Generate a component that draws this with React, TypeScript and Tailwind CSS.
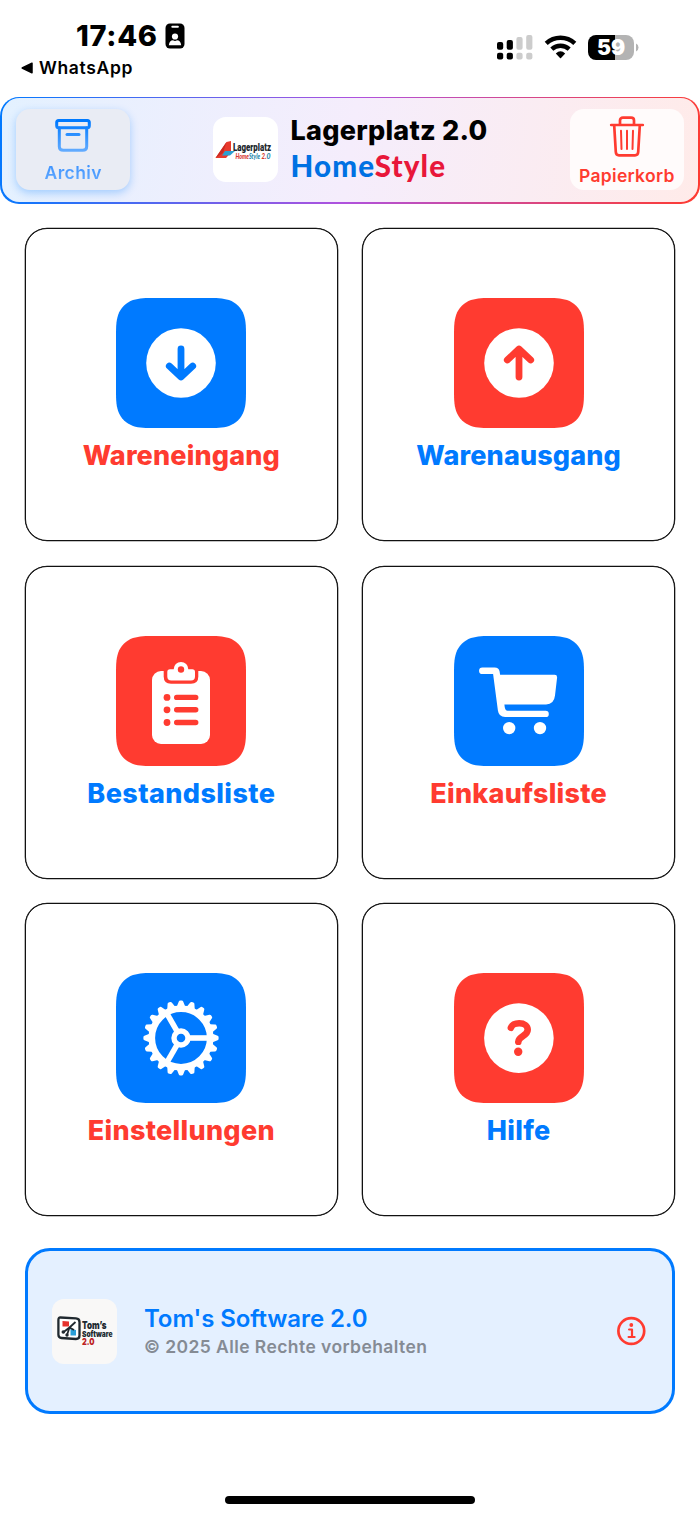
import React from "react";

const BLUE = "#007aff";
const RED = "#ff3b30";

// 130px tile with continuous corners
const TILE_SHAPE =
  "M40 0H90C100.600 0 106.500 0 113 2.100C120 4.600 125.400 10 127.900 17C130 23.500 130 29.400 130 40V90C130 100.600 130 106.500 127.900 113C125.400 120 120 125.400 113 127.900C106.500 130 100.600 130 90 130H40C29.400 130 23.500 130 17 127.900C10 125.400 4.600 120 2.100 113C0 106.500 0 100.600 0 90V40C0 29.400 0 23.500 2.100 17C4.600 10 10 4.600 17 2.100C23.500 0 29.400 0 40 0Z";

interface GlyphProps {
  tint: string;
}

const ArrowDownGlyph: React.FC<GlyphProps> = ({ tint }) => (
  <>
    <circle cx="65" cy="65" r="34.800" fill="#fff" />
    <path
      d="M65 51V78.500M53.300 68L65 79L76.700 68"
      fill="none"
      stroke={tint}
      strokeWidth="6.800"
      strokeLinecap="round"
      strokeLinejoin="round"
    />
  </>
);

const ArrowUpGlyph: React.FC<GlyphProps> = ({ tint }) => (
  <>
    <circle cx="65" cy="65" r="34.800" fill="#fff" />
    <path
      d="M65 79V51.500M53.300 62L65 51L76.700 62"
      fill="none"
      stroke={tint}
      strokeWidth="6.800"
      strokeLinecap="round"
      strokeLinejoin="round"
    />
  </>
);

const ClipboardGlyph: React.FC<GlyphProps> = ({ tint }) => (
  <>
    <rect x="36" y="35" width="58" height="73" rx="9" fill="#fff" />
    <path d="M47.700 34V40.500Q47.700 47.800 55 47.800H75Q82.300 47.800 82.300 40.500V34Z" fill={tint} />
    <path
      d="M54 33.200H57.700A7.300 7.300 0 0 1 72.300 33.200H76.300Q79 33.200 79 36V40.500Q79 44.500 75 44.500H55.300Q51.300 44.500 51.300 40.500V36Q51.300 33.200 54 33.200Z"
      fill="#fff"
    />
    <circle cx="65" cy="33.500" r="3.200" fill={tint} />
    {[61.4, 73.8, 86.5].map((y) => (
      <g key={y} fill={tint}>
        <circle cx="51" cy={y} r="3.400" />
        <rect x="58" y={y - 2.7} width="24.400" height="5.400" rx="2.700" />
      </g>
    ))}
  </>
);

const CartGlyph: React.FC<GlyphProps> = () => (
  <g fill="#fff" transform="translate(-.400 -.400)">
    <path d="M28.800 31.800H41Q45.300 31.800 46 36L46.500 39.200H101Q103.700 39.200 103.500 42L101.400 60Q100.500 68.800 92.500 68.800H50.800L51.100 71.500Q51.600 75.100 54 75.100H92A3.200 3.200 0 0 1 92 81.500H51.500Q45.200 81.500 44.300 75L39.500 38.500H28.800A3.350 3.350 0 0 1 28.800 31.800Z" />
    <circle cx="55.600" cy="92.500" r="6.200" />
    <circle cx="86.400" cy="92.500" r="6.200" />
  </g>
);

const GearGlyph: React.FC<GlyphProps> = () => (
  <g transform="translate(65 65)" stroke="#fff" fill="none">
    <circle r="29.200" strokeWidth="6.600" />
    <circle r="7" strokeWidth="5.400" />
    {[0, 120, 240].map((a) => (
      <path key={a} d="M8 0H29" strokeWidth="5.600" transform={`rotate(${a})`} />
    ))}
    {Array.from({ length: 20 }, (_, i) => (
      <path
        key={i}
        d="M31 -2.700L36 -.700V.700L31 2.700Z"
        fill="#fff"
        strokeWidth="3.200"
        strokeLinejoin="round"
        transform={`rotate(${i * 18})`}
      />
    ))}
  </g>
);

const HelpGlyph: React.FC<GlyphProps> = ({ tint }) => (
  <g transform="translate(-.300 .300)">
    <circle cx="65.200" cy="64.800" r="34.800" fill="#fff" />
    <path
      d="M57.200 54.500C58.500 51.300 61.500 50 65.500 50C70.500 50 74 52.500 74 56.500C74 63 64.800 62.500 64.600 68.500"
      fill="none"
      stroke={tint}
      strokeWidth="6.600"
      strokeLinecap="round"
      strokeLinejoin="round"
    />
    <circle cx="64.500" cy="78.500" r="4.200" fill={tint} />
  </g>
);

interface MenuItem {
  label: string;
  tint: string;
  labelClass: string;
  Glyph: React.FC<GlyphProps>;
}

const MENU: MenuItem[] = [
  { label: "Wareneingang", tint: BLUE, labelClass: "text-[#ff3b30] tracking-[0.150px]", Glyph: ArrowDownGlyph },
  { label: "Warenausgang", tint: RED, labelClass: "text-[#007aff] tracking-[0.150px]", Glyph: ArrowUpGlyph },
  { label: "Bestandsliste", tint: RED, labelClass: "text-[#007aff] tracking-[0.400px]", Glyph: ClipboardGlyph },
  { label: "Einkaufsliste", tint: BLUE, labelClass: "text-[#ff3b30] tracking-[0.250px]", Glyph: CartGlyph },
  { label: "Einstellungen", tint: BLUE, labelClass: "text-[#ff3b30] tracking-[0.300px]", Glyph: GearGlyph },
  { label: "Hilfe", tint: RED, labelClass: "text-[#007aff] tracking-[0.300px]", Glyph: HelpGlyph },
];

const MenuCard: React.FC<{ item: MenuItem }> = ({ item }) => {
  const { Glyph } = item;
  return (
    <button className="flex h-[313px] flex-col items-center rounded-[22px] border border-[#111] bg-white pt-[69px] shadow-[0_0_0_0.300px_#111]">
      <svg width="130" height="130" viewBox="0 0 130 130">
        <path d={TILE_SHAPE} fill={item.tint} />
        <Glyph tint={item.tint} />
      </svg>
      <span className={`mt-[12px] text-[27px] leading-8 font-extrabold whitespace-nowrap ${item.labelClass}`}>
        {item.label}
      </span>
    </button>
  );
};

const StatusBar: React.FC = () => (
  <div className="flex h-[96.500px] items-start justify-between">
    <div className="pl-[21px] pt-[19px]">
      <div className="flex items-center pl-[55px]">
        <span className="w-[89px] pt-px text-[29px] leading-8 font-extrabold tracking-[0.700px] whitespace-nowrap">17:46</span>
        <svg width="20" height="26" viewBox="0 0 20 26">
          <rect x=".500" y=".500" width="19" height="25" rx="4.500" />
          <rect x="6.300" y="2.800" width="7.600" height="2" rx="1" fill="#fff" />
          <circle cx="10" cy="13.500" r="3.100" fill="#fff" />
          <path d="M3.800 22.300Q4.500 17.300 8 17.300Q10 18.600 12 17.300Q15.500 17.300 16.200 22.300Z" fill="#fff" />
        </svg>
      </div>
      <div className="mt-[4px] flex items-center">
        <svg width="13" height="12" viewBox="0 0 13 12">
          <path d="M1.200 6L11 1.200V10.800Z" stroke="#000" strokeWidth="1.500" strokeLinejoin="round" />
        </svg>
        <span className="ml-[5px] text-[17.500px] leading-6 font-semibold tracking-[0.650px]">WhatsApp</span>
      </div>
    </div>
    <div className="flex items-center pt-[34px] pr-[61px]">
      <svg width="36" height="26" viewBox="0 0 36 26">
        <rect x="0" y="8" width="6.200" height="7.700" rx="2" />
        <rect x="9.700" y="6" width="6.200" height="9.700" rx="2" />
        <rect x="19.400" y="3" width="6.200" height="12.700" rx="2" fill="#ccc" />
        <rect x="29.200" y="1" width="6.200" height="14.700" rx="2" fill="#ccc" />
        <rect x="0" y="18.700" width="6.200" height="6.800" rx="2" />
        <rect x="9.700" y="18.700" width="6.200" height="6.800" rx="2" />
        <rect x="19.400" y="18.700" width="6.200" height="6.800" rx="2" fill="#ccc" />
        <rect x="29.200" y="18.700" width="6.200" height="6.800" rx="2" fill="#ccc" />
      </svg>
      <svg className="ml-[11px]" width="33" height="26" viewBox="0 0 33 26">
        <path d="M2.200 9.300A21.300 21.300 0 0 1 30.800 9.300" fill="none" stroke="#000" strokeWidth="4.500" />
        <path d="M7.800 15.200A12.900 12.900 0 0 1 25.200 15.200" fill="none" stroke="#000" strokeWidth="4.400" />
        <path d="M11.800 19.600Q16.500 14.900 21.200 19.600L17 24Q16.500 24.500 16 24Z" />
      </svg>
      <div className="ml-[11px] flex items-center">
        <div className="flex h-[25px] w-[46px] items-center justify-center rounded-[8px] bg-[linear-gradient(90deg,#000_59%,#b3b3b3_59%)] pt-[2px]">
          <span className="text-[21px] leading-6 font-black text-white">59</span>
        </div>
        <svg className="ml-[2px]" width="3" height="9" viewBox="0 0 3 9">
          <path d="M0 .500Q2.500 1.500 2.500 4.500T0 8.500Z" fill="#b3b3b3" />
        </svg>
      </div>
    </div>
  </div>
);

const LagerplatzLogo: React.FC = () => (
  <svg className="shrink-0 overflow-visible" width="65" height="65" viewBox="0 0 65 65">
    <rect width="65" height="65" rx="13" fill="#fff" />
    <path d="M2.500 41L13.500 25L18 24V35.500L13 41Z" fill="#e9392c" />
    <path d="M13.500 25L10 36L2.500 41Z" fill="#c92a22" />
    <path d="M12 34H22L17 38.500H9Z" fill="#2d9fd0" />
    <text x="20" y="33.500" fontSize="11.500" fontWeight="900" fontFamily="Roboto, sans-serif" fill="#20262b" textLength="38" lengthAdjust="spacingAndGlyphs">
      Lagerplatz
    </text>
    <g fontSize="6.500" fontWeight="900" fontStyle="italic" fontFamily="Lato, sans-serif">
      <text x="22.500" y="41.500" fill="#d93a30" textLength="13.500" lengthAdjust="spacingAndGlyphs">Home</text>
      <text x="36" y="41.500" fill="#2787ab" textLength="11" lengthAdjust="spacingAndGlyphs">Style</text>
      <text x="48.500" y="41.500" fill="#d93a30" textLength="5" lengthAdjust="spacingAndGlyphs">2.</text>
      <text x="53.500" y="41.500" fill="#2787ab" textLength="4" lengthAdjust="spacingAndGlyphs">0</text>
    </g>
  </svg>
);

const TomsLogo: React.FC = () => (
  <svg className="shrink-0 overflow-visible" width="65" height="65" viewBox="0 0 65 65">
    <rect width="65" height="65" rx="12" fill="#f9f8f7" />
    <path d="M8.500 18.500L24 19.300Q27.500 19.500 27.500 23V36.500Q27.500 40 24 40L9.500 39Q6.400 38.800 6.400 35.500V21Q6.400 18.400 8.500 18.500Z" fill="#fff" stroke="#20292f" strokeWidth="2.300" />
    <path d="M10.500 22L17 22.500V27.500H10.500Z" fill="#e5322d" />
    <path d="M18.500 30L24 31V36.500H18.500Z" fill="#2a9fd8" />
    <path d="M23.500 23L17.500 28.500L11 33.500M17.500 28.500L15 36M17.500 28.500L22 31" fill="none" stroke="#20292f" strokeWidth="1.800" />
    <circle cx="11.300" cy="33" r="1.800" fill="#20292f" />
    <circle cx="15" cy="36" r="1.700" fill="#20292f" />
    <g fontFamily="Inter, sans-serif" fontWeight="900" fontSize="10.500" fill="#20292f">
      <text x="30" y="29.500" textLength="24.500" lengthAdjust="spacingAndGlyphs">Tom’s</text>
      <text x="30" y="37.500" fontSize="8" textLength="30.500" lengthAdjust="spacingAndGlyphs">Software</text>
      <text x="30" y="46" fontSize="9.500" fill="#bd1f24" textLength="12.500" lengthAdjust="spacingAndGlyphs">2.0</text>
    </g>
  </svg>
);

const Header: React.FC = () => (
  <header className="h-[107px] rounded-[19px] bg-[linear-gradient(98.700deg,#007aff,#af52de_50%,#ff3b30)] p-[1.700px]">
    <div className="flex h-full items-start justify-between rounded-[17.500px] bg-[linear-gradient(98.700deg,#e3f1ff,#f5edfc_50%,#ffebe9)] px-[14.500px] pt-[10.500px]">
      <button className="flex h-[81px] w-[114px] flex-col items-center rounded-[14px] bg-[#e9ecf4] pt-[9px] shadow-[0_3px_8px_rgba(0,122,255,0.3)]">
        <svg width="36" height="34" viewBox="0 0 36 34">
          <defs>
            <linearGradient id="archive-fade" gradientUnits="userSpaceOnUse" x1="0" y1="4" x2="0" y2="34">
              <stop stopColor="#007aff" />
              <stop offset="1" stopColor="#66adff" />
            </linearGradient>
          </defs>
          <g fill="none" stroke="url(#archive-fade)" strokeWidth="3" strokeLinejoin="round" strokeLinecap="round">
            <rect x="1.700" y="2.400" width="32.600" height="7.400" rx="2" />
            <path d="M4.300 10V28.500Q4.300 32.300 8.300 32.300H27.700Q31.700 32.300 31.700 28.500V10" />
            <path d="M12 16.500H24" />
          </g>
        </svg>
        <span className="mt-[9px] bg-linear-to-b from-[#368fff] to-[#67adff] bg-clip-text text-[17.500px] leading-6 font-semibold tracking-[0.350px] text-transparent">
          Archiv
        </span>
      </button>
      <div className="flex pt-[8.500px]">
        <LagerplatzLogo />
        <div className="ml-[13px] flex flex-col">
          <span className="mt-[-4px] text-[27px] leading-9 font-extrabold tracking-[0.250px] whitespace-nowrap">Lagerplatz 2.0</span>
          <span className="mt-[-1px] font-[Lato,sans-serif] text-[29.500px] leading-9 font-black tracking-[1.100px] whitespace-nowrap text-[#0071e3]">
            Home<span className="text-[#e8173a]">Style</span>
          </span>
        </div>
      </div>
      <button className="flex h-[81px] w-[114px] flex-col items-center rounded-[14px] bg-[#fffbfb] pt-[7px]">
        <svg width="36" height="41" viewBox="0 0 36 41" fill="none" stroke="#ff3b30" strokeLinecap="round" strokeLinejoin="round">
          <path d="M2.200 9H33.800" strokeWidth="2.700" />
          <path d="M11 8.500V4.500Q11 1.700 14 1.700H22Q25 1.700 25 4.500V8.500" strokeWidth="2.700" />
          <path d="M5.200 9.500L6.800 36Q7 39.300 10 39.300H26Q29 39.300 29.200 36L30.800 9.500" strokeWidth="2.700" />
          <path d="M12 14.700L12.500 33M18 14.700V33M24 14.700L23.500 33" strokeWidth="2" />
        </svg>
        <span className="mt-[7.500px] text-[17.500px] leading-6 font-semibold tracking-[0.300px] whitespace-nowrap text-[#ff3b30]">
          Papierkorb
        </span>
      </button>
    </div>
  </header>
);

const Footer: React.FC = () => (
  <footer className="mt-[32px] flex h-[166px] items-center rounded-[25px] border-[3px] border-[#007aff] bg-[#e4f0ff] pr-[25px] pl-[24px]">
    <TomsLogo />
    <div className="ml-[27px] flex flex-1 flex-col pt-[2px]">
      <span className="text-[24px] leading-[30px] font-semibold tracking-[-0.100px] text-[#007aff]">Tom's Software 2.0</span>
      <span className="text-[17.500px] leading-[26px] font-semibold tracking-[0.420px] text-[#858b94]">
        © 2025 Alle Rechte vorbehalten
      </span>
    </div>
    <svg width="32" height="32" viewBox="0 0 32 32" fill="none" stroke="#ff3b30" strokeLinecap="round" strokeLinejoin="round">
      <circle cx="16.300" cy="16" r="12.900" strokeWidth="2.700" />
      <path d="M14.100 14.500H17V22M13.600 22H19.600" strokeWidth="2.200" />
      <circle cx="16.300" cy="10" r="1.900" fill="#ff3b30" stroke="none" />
    </svg>
  </footer>
);

export default function App() {
  return (
    <div className="flex h-[1517px] w-[700px] flex-col bg-white font-[Inter,sans-serif] text-black">
      <StatusBar />
      <Header />
      <main className="px-[25px] pt-[24.500px]">
        <div className="grid grid-cols-2 gap-[24.700px]">
          {MENU.map((item) => (
            <MenuCard key={item.label} item={item} />
          ))}
        </div>
        <Footer />
      </main>
      <div className="mx-auto mt-auto mb-[13px] h-2 w-[250px] rounded-full bg-black" />
    </div>
  );
}
